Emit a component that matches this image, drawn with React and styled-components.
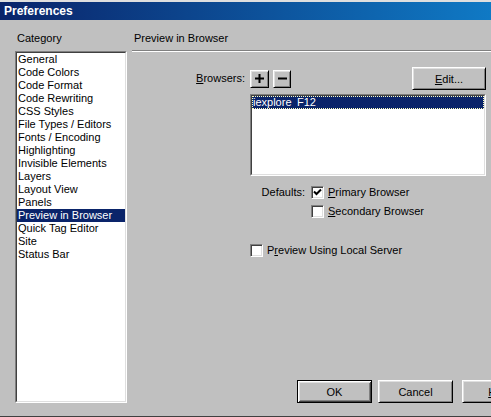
import styled, { createGlobalStyle } from "styled-components";

const GlobalStyle = createGlobalStyle`
  html, body {
    margin: 0;
    padding: 0;
    overflow: hidden;
    background: #c0c0c0;
  }
  body {
    font-family: "Liberation Sans", Arial, sans-serif;
    font-size: 11px;
    color: #000;
  }
`;

const Window = styled.div`
  width: 552px;
  height: 417px;
  box-sizing: border-box;
  display: flex;
  flex-direction: column;
  background: #c0c0c0;
  border-top: 2px solid #dfdfdf;
  border-bottom: 1px solid #404040;
  padding-bottom: 2px;
`;

const TitleBar = styled.div`
  height: 18px;
  line-height: 18px;
  padding-left: 4px;
  background: linear-gradient(90deg, #0a246a 0%, #1084d0 100%);
  color: #fff;
  font-weight: bold;
  font-size: 12px;
`;

const Body = styled.div`
  flex: 1;
  min-height: 0;
  display: grid;
  grid-template-columns: 112px 1fr;
  column-gap: 5px;
  padding: 12px 15px 11px 15px;
`;

const Column = styled.div`
  display: flex;
  flex-direction: column;
  min-height: 0;
`;

const Caption = styled.div`
  line-height: 13px;
  padding-left: 2px;
`;

const Sunken = styled.div`
  border: 1px solid;
  border-color: #808080 #fff #fff #808080;
  background: #fff;
  ${(p) => p.$grow && "flex: 1;"}
  ${(p) => p.$height && `height: ${p.$height}px;`}
  ${(p) => p.$top && `margin-top: ${p.$top}px;`}
  box-sizing: border-box;
  display: flex;
`;

const ListBody = styled.div`
  flex: 1;
  border: 1px solid;
  border-color: #404040 #dfdfdf #dfdfdf #404040;
  background: #fff;
  overflow: hidden;
`;

const Item = styled.div`
  line-height: 13px;
  height: 13px;
  padding-left: 1px;
  white-space: nowrap;
  background: ${(p) => (p.$selected ? "#0a246a" : "transparent")};
  color: ${(p) => (p.$selected ? "#fff" : "#000")};
  ${(p) => p.$focus && "outline: 1px dotted #ffffc0; outline-offset: -1px;"}
`;

const ItemName = styled.span`
  display: inline-block;
  width: 44px;
`;

const Separator = styled.div`
  margin-top: 5px;
  border-top: 1px solid #808080;
  border-bottom: 1px solid #fff;
`;

const Content = styled.div`
  display: grid;
  grid-template-columns: 113px 236px;
  column-gap: 5px;
  margin-top: 15px;
  align-items: center;
`;

const FieldLabel = styled.div`
  text-align: right;
  line-height: 13px;
`;

const Toolbar = styled.div`
  display: flex;
  align-items: center;
  gap: 4px;
`;

const Button = styled.button`
  font: inherit;
  color: #000;
  background: #c0c0c0;
  width: ${(p) => p.$w || 75}px;
  height: ${(p) => p.$h || 23}px;
  padding: 0;
  margin: 0;
  margin-left: ${(p) => (p.$push ? "auto" : p.$gap ? `${p.$gap}px` : "0")};
  box-sizing: border-box;
  display: flex;
  align-items: center;
  justify-content: center;
  border: 1px solid;
  border-color: ${(p) => (p.$default ? "#000" : "#fff #000 #000 #fff")};
  box-shadow: ${(p) =>
    p.$default
      ? "inset 1px 1px #fff, inset -1px -1px #404040, inset 2px 2px #dfdfdf, inset -2px -2px #808080"
      : "inset 1px 1px #dfdfdf, inset -1px -1px #808080"};
  flex-shrink: 0;
`;

const U = styled.span`
  text-decoration: underline;
`;

const Options = styled.div`
  grid-column: 2;
  display: flex;
  flex-direction: column;
  margin-top: 10px;
`;

const CheckRow = styled.div`
  display: flex;
  align-items: center;
  height: 13px;
  gap: 4px;
  margin-top: ${(p) => p.$top || 0}px;
  margin-left: ${(p) => p.$indent || 0}px;
  line-height: 13px;
  white-space: nowrap;
`;

const DefaultsLabel = styled.span`
  width: 55px;
  text-align: right;
  margin-right: 2px;
`;

const Box = styled.span`
  width: 13px;
  height: 13px;
  box-sizing: border-box;
  border: 1px solid;
  border-color: #808080 #fff #fff #808080;
  box-shadow: inset 1px 1px #404040, inset -1px -1px #dfdfdf;
  background: #fff;
  display: flex;
  align-items: center;
  justify-content: center;
  flex-shrink: 0;
`;

const ButtonRow = styled.div`
  margin-top: auto;
  display: flex;
  justify-content: flex-end;
  gap: 6px;
`;

const categories = [
  "General",
  "Code Colors",
  "Code Format",
  "Code Rewriting",
  "CSS Styles",
  "File Types / Editors",
  "Fonts / Encoding",
  "Highlighting",
  "Invisible Elements",
  "Layers",
  "Layout View",
  "Panels",
  "Preview in Browser",
  "Quick Tag Editor",
  "Site",
  "Status Bar",
];

function Checkbox({ checked }) {
  return (
    <Box>
      {checked && (
        <svg width="9" height="9" viewBox="0 0 9 9">
          <path d="M1 3.5 L3.5 6 L8 1.5" fill="none" stroke="#000" strokeWidth="2" />
        </svg>
      )}
    </Box>
  );
}

export default function App() {
  return (
    <>
      <GlobalStyle />
      <Window>
        <TitleBar>Preferences</TitleBar>
        <Body>
          <Column>
            <Caption>Category</Caption>
            <Sunken $grow $top={6}>
              <ListBody>
                {categories.map((c) => (
                  <Item key={c} $selected={c === "Preview in Browser"}>
                    {c}
                  </Item>
                ))}
              </ListBody>
            </Sunken>
          </Column>

          <Column>
            <Caption>Preview in Browser</Caption>
            <Separator />
            <Content>
              <FieldLabel>
                <U>B</U>rowsers:
              </FieldLabel>
              <Toolbar>
                <Button $w={19} $h={18}>
                  <svg width="9" height="9" viewBox="0 0 9 9">
                    <rect x="3.5" y="0" width="2" height="9" fill="#000" />
                    <rect x="0" y="3.5" width="9" height="2" fill="#000" />
                  </svg>
                </Button>
                <Button $w={18} $h={18}>
                  <svg width="9" height="9" viewBox="0 0 9 9">
                    <rect x="0" y="3.5" width="9" height="2" fill="#000" />
                  </svg>
                </Button>
                <Button $w={74} $push>
                  <span>
                    <U>E</U>dit...
                  </span>
                </Button>
              </Toolbar>
              <div />
              <Sunken $height={82} $top={4}>
                <ListBody>
                  <Item $selected $focus>
                    <ItemName>iexplore</ItemName>F12
                  </Item>
                </ListBody>
              </Sunken>
              <Options>
                <CheckRow>
                  <DefaultsLabel>Defaults:</DefaultsLabel>
                  <Checkbox checked />
                  <span>
                    <U>P</U>rimary Browser
                  </span>
                </CheckRow>
                <CheckRow $top={6} $indent={61}>
                  <Checkbox />
                  <span>
                    <U>S</U>econdary Browser
                  </span>
                </CheckRow>
                <CheckRow $top={26}>
                  <Checkbox />
                  <span>
                    P<U>r</U>eview Using Local Server
                  </span>
                </CheckRow>
              </Options>
            </Content>
            <ButtonRow>
              <Button $default>OK</Button>
              <Button>Cancel</Button>
              <Button $gap={3}>
                <span>
                  <U>H</U>elp
                </span>
              </Button>
            </ButtonRow>
          </Column>
        </Body>
      </Window>
    </>
  );
}
